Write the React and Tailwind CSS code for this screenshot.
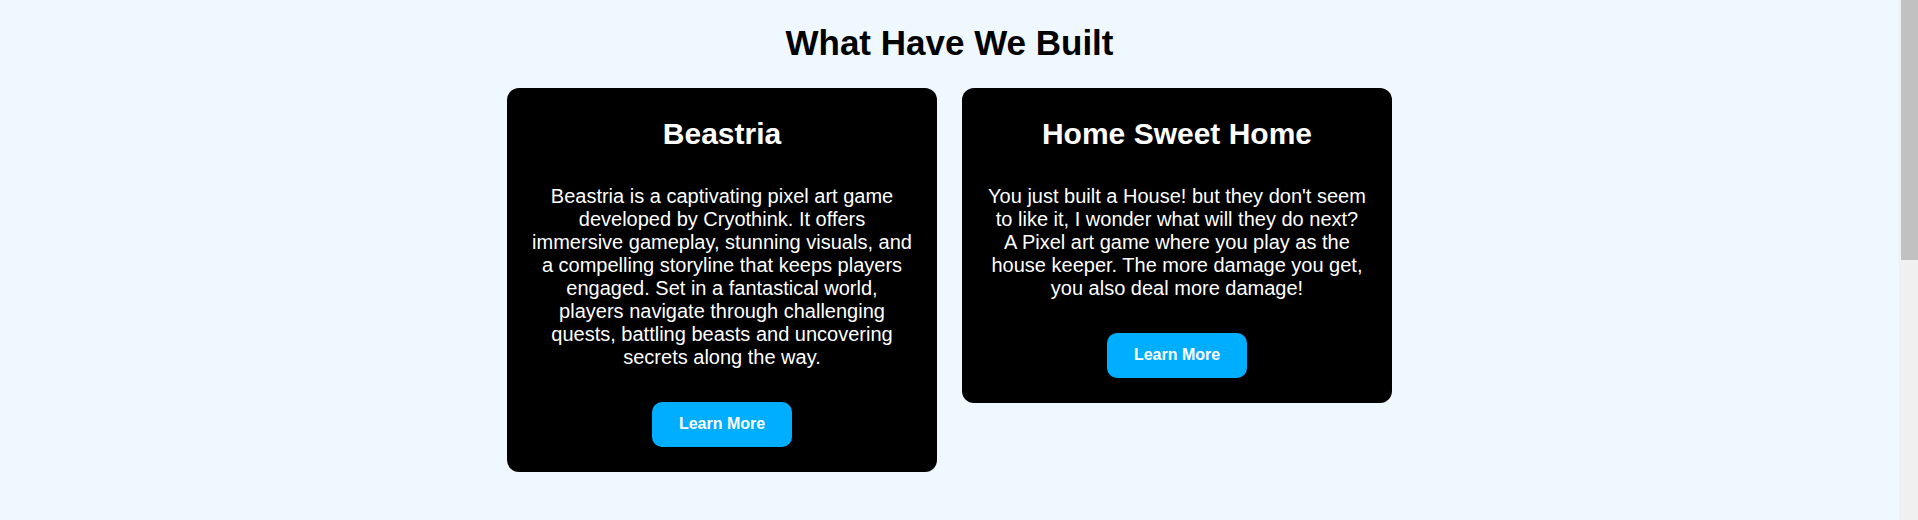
import React from "react";

const cards = [
  {
    title: "Beastria",
    lines: [
      "Beastria is a captivating pixel art game",
      "developed by Cryothink. It offers",
      "immersive gameplay, stunning visuals, and",
      "a compelling storyline that keeps players",
      "engaged. Set in a fantastical world,",
      "players navigate through challenging",
      "quests, battling beasts and uncovering",
      "secrets along the way.",
    ],
  },
  {
    title: "Home Sweet Home",
    lines: [
      "You just built a House! but they don't seem",
      "to like it, I wonder what will they do next?",
      "A Pixel art game where you play as the",
      "house keeper. The more damage you get,",
      "you also deal more damage!",
    ],
  },
];

function Card({ title, lines }) {
  return (
    <div className="w-[430px] bg-black rounded-xl px-[20px] pt-[29px] pb-[25px] text-white text-center flex flex-col items-center">
      <h2 className="text-[30px] font-bold leading-[34.5px]">{title}</h2>
      <p className="mt-[33px] text-[20px] leading-[23px] whitespace-nowrap">
        {lines.map((l, i) => (
          <React.Fragment key={i}>
            {l}
            {i < lines.length - 1 && <br />}
          </React.Fragment>
        ))}
      </p>
      <button className="mt-[33px] bg-[#00aeff] text-white rounded-[10px] text-[16px] font-bold leading-[18px] w-[140px] h-[45px]">
        Learn More
      </button>
    </div>
  );
}

export default function App() {
  return (
    <div className="flex min-h-screen bg-[#f0f8ff] font-['Liberation_Sans',Arial,sans-serif] text-black">
      <main className="flex-1 min-h-[1040px]">
        <h1 className="text-center text-[35px] font-bold leading-[40px] pt-[23px] mb-[25px]">
          What Have We Built
        </h1>
        <div className="flex justify-center items-start gap-[25px]">
          {cards.map((c) => (
            <Card key={c.title} {...c} />
          ))}
        </div>
      </main>
      <aside className="w-[19px] shrink-0 bg-[#f0f0f0] pl-[2px]">
        <div className="h-[260px] bg-[#c1c1c1]" />
      </aside>
    </div>
  );
}
